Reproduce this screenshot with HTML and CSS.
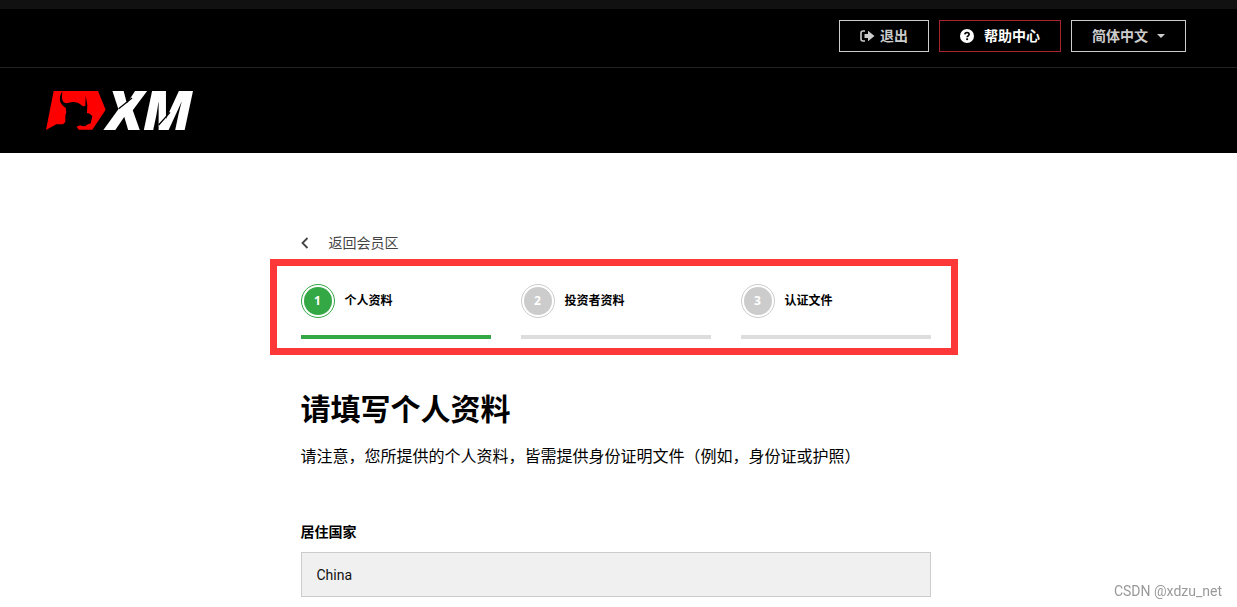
FILE: index.html
```html
<!DOCTYPE html>
<html lang="zh-CN">
<head>
<meta charset="utf-8">
<meta name="viewport" content="width=device-width, initial-scale=1">
<title>XM</title>
<link rel="stylesheet" href="styles.css">
</head>
<body>
<header class="header">
  <nav class="topbar">
    <button class="btn" type="button">
      <svg viewBox="0 0 15 12" width="15" height="12" aria-hidden="true"><path d="M5 1H3Q1 1 1 3V9Q1 11 3 11H5" fill="none" stroke="currentColor" stroke-width="1.6"/><path d="M4.500 4H8V0.800L14.500 6L8 11.200V8H4.500Z" fill="currentColor"/></svg>
      <span>退出</span>
    </button>
    <button class="btn btn-help" type="button">
      <svg viewBox="0 0 14 14" width="14" height="14" aria-hidden="true"><circle cx="7" cy="7" r="7" fill="#fff"/><path d="M4.900 5.400Q5 3.500 7 3.500Q9.100 3.600 9.100 5.300Q9.100 6.300 8 6.900Q7.200 7.300 7.200 8.300" fill="none" stroke="#000" stroke-width="1.700"/><rect x="6.200" y="9.300" width="1.900" height="1.800" fill="#000"/></svg>
      <span>帮助中心</span>
    </button>
    <button class="btn btn-lang" type="button">
      <span>简体中文</span>
      <svg viewBox="0 0 8 4" width="8" height="4" aria-hidden="true"><path d="M0 0H8L4 4Z" fill="currentColor"/></svg>
    </button>
  </nav>
  <div class="brand">
    <a class="logo" href="#" aria-label="XM">
      <svg viewBox="48 0 480 210" width="160" height="70" role="img" aria-label="XM">
        <path d="M71 48H204L227 104L187 164H146L140 155L150 151Q164 157 171 149L182 145L187 123L179 116L171 114L172 91L167 62L166 93L158 94Q147 81 128 81L108 85Q95 82 96 66L97 49Q88 62 90 77Q94 91 107 98Q111 109 106 122L106 141L99 148H79L48 165Z" fill="#f00"/>
        <text class="logo-text" x="230" y="164">XM</text>
        <path d="M266 101L306 69M386 150L420 112" stroke="#000" stroke-width="4"/>
      </svg>
    </a>
  </div>
</header>
<div class="page">
  <main class="content">
    <a class="back" href="#">
      <svg viewBox="0 0 8 12" width="8" height="12" aria-hidden="true"><path d="M6.500 1L1.500 6L6.500 11" fill="none" stroke="#444" stroke-width="1.800"/></svg>
      <span>返回会员区</span>
    </a>
    <ol class="steps">
      <li class="step step-active"><div class="step-head"><span class="step-num">1</span><span>个人资料</span></div></li>
      <li class="step"><div class="step-head"><span class="step-num">2</span><span>投资者资料</span></div></li>
      <li class="step"><div class="step-head"><span class="step-num">3</span><span>认证文件</span></div></li>
    </ol>
    <h1 class="title">请填写个人资料</h1>
    <p class="note">请注意，您所提供的个人资料，皆需提供身份证明文件（例如，身份证或护照）</p>
    <label class="label" for="country">居住国家</label>
    <input class="field" id="country" type="text" value="China" readonly>
  </main>
</div>
<div class="credit">CSDN @xdzu_net</div>
</body>
</html>
```
FILE: styles.css
```css
* {
  box-sizing: border-box;
}

body {
  margin: 0;
  background: #fff;
  color: #000;
  font-family: "Open Sans", "Noto Sans CJK SC", sans-serif;
}

.header {
  background: #000;
  border-top: 9px solid #111;
}

.topbar {
  display: flex;
  justify-content: flex-end;
  gap: 10px;
  padding: 11px 51px 15px;
  border-bottom: 1px solid #222;
}

.btn {
  display: flex;
  align-items: center;
  justify-content: center;
  gap: 5px;
  height: 32px;
  padding: 0 20px;
  border: 1px solid #ccc;
  background: #000;
  color: #ccc;
  font-family: inherit;
  font-size: 14px;
  font-weight: 600;
  line-height: 20px;
}

.btn-help {
  gap: 10px;
  border-color: #a8232b;
  color: #fff;
  font-weight: 700;
}

.btn-lang {
  gap: 9px;
}

.brand {
  display: flex;
  padding: 7px 46px 8px;
}

.logo {
  display: flex;
}

.logo-text {
  fill: #fff;
  font-size: 164px;
  font-style: italic;
  font-weight: 800;
}

.page {
  padding: 80px 6px 0 0;
}

.content {
  max-width: 630px;
  margin: 0 auto;
}

.back {
  display: flex;
  align-items: center;
  gap: 20px;
  color: #444;
  font-size: 14px;
  line-height: 20px;
  text-decoration: none;
}

.steps {
  display: grid;
  grid-template-columns: repeat(3, 1fr);
  gap: 30px;
  margin: 6px -27px 0 -31px;
  padding: 18px 20px 9px 24px;
  border: 7px solid #fc3838;
  list-style: none;
}

.step {
  padding-bottom: 17px;
  border-bottom: 4px solid #ddd;
}

.step-active {
  border-color: #34a845;
}

.step-head {
  display: flex;
  align-items: center;
  gap: 10px;
  font-size: 12px;
  font-weight: 700;
  line-height: 20px;
}

.step-num {
  width: 34px;
  height: 34px;
  border: 1px solid #ccc;
  border-radius: 50%;
  padding: 2px;
  background: #ccc content-box;
  color: #fff;
  line-height: 28px;
  text-align: center;
}

.step-active .step-num {
  border-color: #34a845;
  background-color: #34a845;
}

.title {
  margin: 34px 0 0;
  font-size: 30px;
  font-weight: 700;
  line-height: 40px;
}

.note {
  margin: 15px 0 0;
  font-size: 16px;
  line-height: 24px;
}

.label {
  display: block;
  margin-top: 54px;
  font-size: 14px;
  font-weight: 700;
  line-height: 20px;
}

.field {
  display: block;
  width: 100%;
  height: 45px;
  margin-top: 10px;
  padding: 0 15px;
  border: 1px solid #ccc;
  border-radius: 0;
  background: #f0f0f0;
  color: #111;
  font-family: Roboto, sans-serif;
  font-size: 14px;
}

.credit {
  position: fixed;
  right: 15px;
  bottom: 6px;
  color: #999;
  font-family: Roboto, sans-serif;
  font-size: 14px;
  line-height: 20px;
}
```
